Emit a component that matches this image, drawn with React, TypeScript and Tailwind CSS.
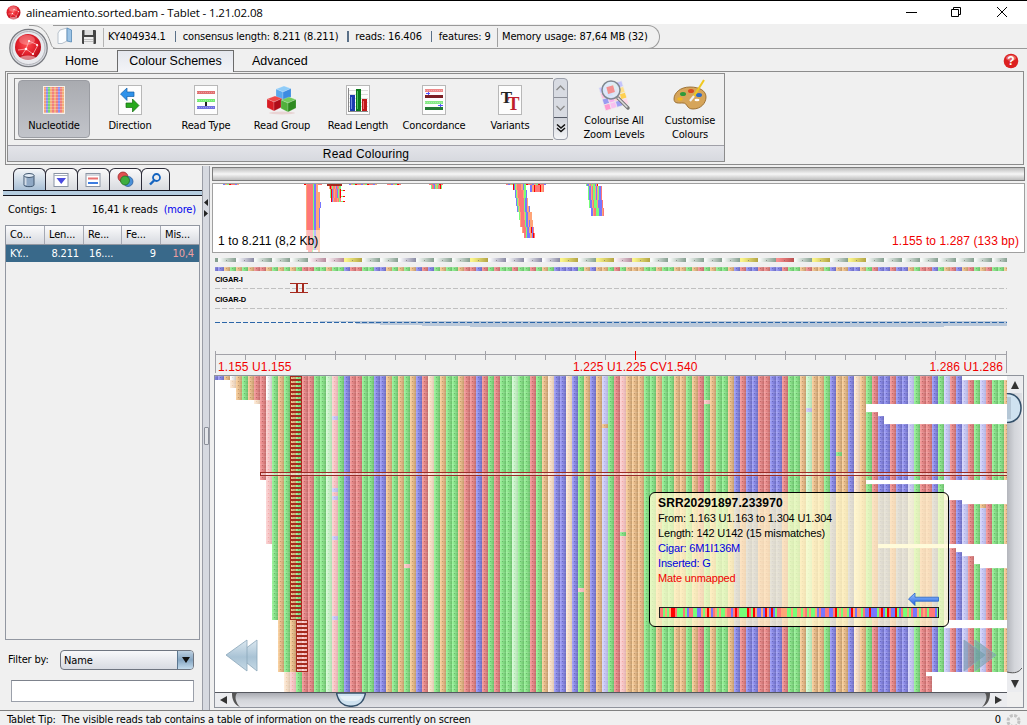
import React from "react";

const UI = "font-['DejaVu_Sans_Condensed','DejaVu_Sans',sans-serif] font-stretch-condensed tracking-[-0.16px]";
const ARIAL = "font-['Liberation_Sans',sans-serif]";

/* ---------- sequence data ---------- */

// G/B/R/O are matching bases, lower case letters are pale (mismatching) bases
const COLUMNS =
  "BBOnOGORRrGOGOGRRGGgrGBRRGGBBOGOGOBRoGOGGORRBRGRGGgGGRGOoBBoBGOBObGRrOOOGGOGGOOGORGOGGOBRBBRRBBRGGOgOOGBOOBoOGRBBRBBbGRRBGbRBbRGbRGGO";
const CONSENSUS_DIFFS: Record<number, string> = {
  3: "G", 9: "O", 19: "O", 20: "G", 36: "B", 50: "R", 56: "G", 59: "B", 65: "O",
  68: "G", 99: "R", 107: "B", 116: "O", 122: "O", 125: "O", 128: "O",
};
const CONSENSUS = COLUMNS.split("").map((c, i) => CONSENSUS_DIFFS[i] ?? c);
const PROTEIN = "gpgggrryggpgggyppppygyrygggggygRgygygggggggg";

const SHADES: Record<string, string[]> = {
  R: ["#f39c9c", "#ec9292", "#e48989", "#dc8181", "#d27878", "#c67070"],
  G: ["#9bf19b", "#92e992", "#8ae18a", "#81d881", "#78ce78", "#70c270"],
  B: ["#a0a0f4", "#9595ed", "#8b8be5", "#8181db", "#7979d0", "#7171c4"],
  O: ["#f7cf9e", "#efc594", "#e7bc8b", "#deb382", "#d4a979", "#c7a071"],
  r: ["#fbd2d2", "#f9cccc", "#f6c6c6", "#f1c0c0", "#ebbaba", "#e3b3b3"],
  g: ["#d6fad6", "#cff6cf", "#c9f2c9", "#c2ecc2", "#bbe6bb", "#b4deb4"],
  b: ["#d6d6fb", "#cfcff8", "#c9c9f4", "#c2c2ee", "#bcbce8", "#b5b5e0"],
  o: ["#fdebd8", "#fae5d0", "#f6dfc9", "#f0d9c2", "#ead2bb", "#e2cab3"],
  n: ["#ffffff", "#f8f8f8", "#efefef", "#e4e4e4", "#d8d8d8", "#cccccc"],
};
const DOTS: Record<string, string> = {
  R: "#b45f5f", G: "#5faf5f", B: "#6060b2", O: "#b58d62", r: "#ee9f9f", g: "#9fdd9f", b: "#a6a6e0", o: "#eac7a4", n: "#cccccc",
};

const ROWS = 79;
const firstColumn = (r: number) =>
  r < 1 ? 0 : r < 3 ? 3 : r < 6 ? 4 : r < 7 ? 7 : r < 26 ? 8 : r < 42 ? 9 : r < 61 ? 10 : r < 74 ? 11 : 12;
const RIGHT_EDGES: Record<number, number> = {
  0: 125, 7: 109, 8: 109, 9: 111, 10: 112, 11: 112, 26: 109, 27: 122, 28: 122, 29: 122, 30: 122, 31: 125,
  42: 111, 43: 124, 44: 125, 45: 127, 46: 127, 47: 128, 61: 122, 62: 122, 74: 119, 75: 120, 76: 120, 77: 120, 78: 120,
};
const SPOTS: Record<string, string> = {
  "20-10": "b", "20-28": "b", "20-30": "b", "20-40": "b", "20-60": "b", "65-12": "O", "82-6": "r", "99-8": "b",
  "104-19": "G", "68-39": "G", "32-47": "r", "61-53": "r", "128-32": "O",
};

function baseAt(k: number, r: number) {
  if (k < firstColumn(r) || k >= (RIGHT_EDGES[r] ?? 133)) return "";
  const spot = SPOTS[`${k}-${r}`];
  if (spot) return spot;
  if (k === 3 && r > 0) return "o";
  if (k === 7 && r === 6) return "o";
  if (k === 9 && r < 6) return "n";
  if (r >= 74 && k === 12) return "o";
  if (r >= 74 && k === 13) return "r";
  if (r >= 61 && r < 74 && (k === 14 || k === 15)) return "r";
  return COLUMNS[k];
}

function BasePatterns({ id, dx, h }: { id: string; dx: number; h: number }) {
  return (
    <defs>
      {Object.keys(SHADES).map((c) => (
        <pattern key={c} id={`${id}${c}`} x={dx} y={0} width={6} height={h} patternUnits="userSpaceOnUse">
          {SHADES[c].map((f, i) => (
            <rect key={i} x={i} y={0} width={1} height={h} fill={f} />
          ))}
          <rect x={0} y={0} width={6} height={1} fill="#fff" opacity={0.1} />
          <rect x={2} y={1} width={1} height={1} fill={DOTS[c]} opacity={0.75} />
        </pattern>
      ))}
    </defs>
  );
}

function ReadCanvas() {
  const runs: { k: number; from: number; to: number; c: string }[] = [];
  for (let k = 0; k < 133; k++) {
    let from = 0;
    for (let r = 1; r <= ROWS; r++) {
      const prev = baseAt(k, from);
      if (r === ROWS || baseAt(k, r) !== prev) {
        if (prev) runs.push({ k, from, to: r, c: prev });
        from = r;
      }
    }
  }
  return (
    <svg width={792} height={316} className="block shrink-0 bg-white" shapeRendering="crispEdges">
      <BasePatterns id="read" dx={3} h={4} />
      {runs.map((s, i) => (
        <rect key={i} x={6 * s.k - 3} y={4 * s.from} width={6} height={4 * (s.to - s.from)} fill={`url(#read${s.c})`} />
      ))}
      {Array.from({ length: 74 }, (_, r) => (
        <rect key={r} x={r < 61 ? 75.5 : 81.5} y={4 * r + 0.5} width={11} height={3} fill="none" stroke="#a52a1e" strokeWidth={1} />
      ))}
      <rect x={46} y={97} width={746} height={2} fill="#fff" opacity={0.45} />
      <rect x={45.5} y={96.5} width={760} height={3} fill="none" stroke="#9c2a24" strokeWidth={1} />
      <g shapeRendering="auto" stroke="#8ba7ba" strokeWidth={0.8}>
        <path d="M22 279 L42 264 V295Z" fill="url(#nav)" />
        <path d="M11 279 L32 264 V295Z" fill="url(#nav)" />
        <path d="M770 279 L749 264 V295Z" fill="#6f8fa8" fillOpacity={0.55} />
        <path d="M781 279 L760 264 V295Z" fill="#6f9fa8" fillOpacity={0.55} />
      </g>
      <defs>
        <linearGradient id="nav" x1="0" y1="0" x2="0" y2="1">
          <stop offset="0" stopColor="#dce8f0" />
          <stop offset=".55" stopColor="#a9c3d5" />
          <stop offset="1" stopColor="#c7dae6" />
        </linearGradient>
      </defs>
    </svg>
  );
}

/* ---------- overview ---------- */

function thin(x: number, w: number, y = 0) {
  const p = ["#ff7777", "#ff0000", "#77ff77", "#ffa577", "#7777ff", "#ff7777"];
  return Array.from({ length: Math.floor(w / 2) }, (_, i) => (
    <rect key={`${x}-${y}-${i}`} x={x + i * 2} y={y} width={2} height={1} fill={p[(i * 5 + x) % 6]} />
  ));
}
function stripes(x: number, y: number, h: number, colours: string) {
  const m: Record<string, string> = { r: "#ff7777", g: "#77ff77", b: "#7777ff", o: "#ffa577", X: "#ff0000", d: "#a52a1e" };
  return colours.split("").map((c, i) => <rect key={`${x}-${y}-${i}`} x={x + i} y={y} width={1} height={h} fill={m[c]} />);
}

function Overview() {
  return (
    <div className="relative mt-[2px] flex h-[70px] w-[813px] border border-[#a0a0a0] bg-white">
      <svg width={811} height={68} shapeRendering="crispEdges" className="absolute left-0 top-0">
        {thin(10, 16)}
        {thin(91, 18)}
        {stripes(93, 0, 52, "orrrrrrgbboo")}
        {stripes(93, 52, 14, "orrrrrrgbboob")}
        {stripes(95, 66, 2, "rrrrg")}
        {stripes(105, 8, 60, "oo")}
        {stripes(106, 24, 20, "b")}
        {stripes(107, 18, 6, "b")}
        <rect x={114} y={0} width={15} height={2} fill="#a52a1e" />
        {stripes(116, 2, 3, "oXrgrrobrrgg")}
        {stripes(117, 5, 9, "gXbrorrbgrX")}
        {stripes(118, 14, 4, "Xborrrorgr")}
        {thin(128, 4, 6)}
        {thin(128, 4, 12)}
        {thin(128, 4, 17)}
        {thin(136, 28)}
        {thin(174, 14)}
        {thin(216, 14)}
        {stripes(218, 1, 4, "grrbgogrrXg")}
        {thin(293, 40)}
        {stripes(300, 0, 6, "Xbgorrrroobgg")}
        {stripes(302, 6, 8, "bgorrrrroggb")}
        {stripes(303, 14, 8, "bgorrrrrgbbo")}
        {stripes(304, 22, 6, "bgorrrrgbboob")}
        {stripes(306, 28, 8, "gorrrogbboooo")}
        {stripes(307, 36, 7, "orrrrgbbobooo")}
        {stripes(309, 43, 6, "orrrgbbooXbr")}
        {stripes(311, 49, 5, "rrgbbboobXr")}
        {stripes(317, 1, 7, "bbooXrrrrrXoor")}
        {stripes(373, 0, 2, "gbborgoggboX")}
        {stripes(375, 2, 14, "gbborggobogbbr")}
        {stripes(376, 16, 8, "gbborgggobbbbr")}
        {stripes(378, 24, 8, "bborrgggbbbor")}
        <rect x={0} y={46} width={108} height={22} fill="#fff" opacity={0.5} />
      </svg>
      <div className={`${ARIAL} relative flex w-full items-end justify-between pb-[3px] pl-[5px] pr-[5px] text-[12px] leading-[15px] tracking-[0.1px] text-black`}>
        <span>1 to 8.211 (8,2 Kb)</span>
        <span className="text-[#f00000]">1.155 to 1.287 (133 bp)</span>
      </div>
    </div>
  );
}

function Tracks() {
  const pc: Record<string, [string, string]> = {
    g: ["#f7faf8", "#86a090"], p: ["#fbfbfd", "#8a8aa4"], r: ["#fbf3f6", "#b68a9c"], y: ["#fbf58a", "#b3a544"], R: ["#f88f8f", "#b95050"],
  };
  return (
    <svg width={813} height={122} className="block shrink-0" shapeRendering="crispEdges">
      <BasePatterns id="con" dx={6} h={4} />
      <defs>
        {Object.keys(pc).map((c) => (
          <linearGradient key={c} id={`aa${c}`}>
            <stop offset={0.1} stopColor={pc[c][0]} />
            <stop offset={1} stopColor={pc[c][1]} />
          </linearGradient>
        ))}
      </defs>
      <rect x={3} y={5} width={3} height={4} fill="#86a090" />
      {PROTEIN.split("").map((c, i) => (
        <g key={i}>
          <rect x={6 + i * 18} y={5} width={Math.min(18, 795 - 6 - i * 18)} height={4} fill={`url(#aa${c})`} />
          <rect x={14 + i * 18} y={7} width={1} height={1} fill="#666" opacity={0.6} />
        </g>
      ))}
      <g transform="translate(0 14)">
        {CONSENSUS.map((c, k) => (
          <rect key={k} x={k ? 6 * k : 3} y={0} width={k === 0 || k === 132 ? 3 : 6} height={4} fill={`url(#con${c})`} />
        ))}
      </g>
      <g className={ARIAL} fontSize={7.5} fontWeight={700} fill="#000" letterSpacing={-0.15}>
        <text x={3} y={29}>CIGAR-I</text>
        <text x={3} y={49}>CIGAR-D</text>
      </g>
      <g stroke="#c0c0c0" strokeDasharray="5 2">
        <path d="M3 35.5H795" />
        <path d="M3 55.5H795" />
      </g>
      <path d="M78 30.5H96M78 39.5H96" stroke="#a52a1e" />
      <path d="M85 30V40M91 30V40" stroke="#a52a1e" strokeWidth={2} />
      <path d="M108 68H795V73H732V74H258V73H210V72H168V71H144V69H108Z" fill="#b9c8da" />
      <path d="M3 69.5H795" stroke="#2c66a8" strokeDasharray="5 2" />
      <path d="M3 101.5H795" stroke="#a2a2a8" />
      {Array.from({ length: 26 }, (_, i) => i + 1).map((i) => {
        const major = i % 5 === 4;
        return <path key={i} d={`M${3.5 + i * 30} ${major ? 98 : 102}V107`} stroke={i === 14 ? "#f00000" : "#a2a2a8"} />;
      })}
      <path d="M3.5 98V120M794.5 98V120" stroke="#a2a2a8" />
    </svg>
  );
}

/* ---------- tooltip ---------- */

function ReadTooltip() {
  const seq = (COLUMNS.slice(8) + "GRBBOGRORGRRRBGO").toUpperCase().slice(0, 140).split("");
  [6, 7, 24, 38, 44, 47, 53, 56, 88, 96, 105, 111, 114, 118].forEach((p) => (seq[p] = "X"));
  const m: Record<string, string> = { R: "#ff7777", G: "#77ff77", B: "#7777ff", O: "#ffa577", X: "#ff0000" };
  return (
    <div className={`${ARIAL} absolute left-[434px] top-[116px] flex h-[135px] w-[300px] flex-col rounded-[6px] border border-black bg-[#fffacd]/75 pl-[8px] pt-[2px] text-[11px] leading-[15px] tracking-[-0.15px] text-black`}>
      <span className="text-[12px] font-bold leading-[16px] tracking-[0.15px]">SRR20291897.233970</span>
      <span>From: 1.163 U1.163 to 1.304 U1.304</span>
      <span>Length: 142 U142 (15 mismatches)</span>
      <span className="text-[#0000e0]">Cigar: 6M1I136M</span>
      <span className="text-[#0000e0]">Inserted: G</span>
      <span className="text-[#f00000]">Mate unmapped</span>
      <svg width={284} height={34} className="mt-[5px] block">
        <defs>
          <linearGradient id="arr" x1="0" y1="0" x2="0" y2="1">
            <stop offset="0" stopColor="#9cc4ff" />
            <stop offset="1" stopColor="#1f62e0" />
          </linearGradient>
        </defs>
        <path d="M250.500 8 L257 2 V6.2 H280.500 V10.2 H257 V14.5Z" fill="url(#arr)" stroke="#2663c8" strokeWidth={0.8} />
        <g shapeRendering="crispEdges">
          {seq.map((c, i) => (
            <rect key={i} x={1 + i * 2} y={17} width={2} height={10} fill={m[c]} />
          ))}
          <rect x={1.5} y={16.5} width={279} height={10} fill="none" stroke="#222" />
        </g>
      </svg>
    </div>
  );
}

/* ---------- ribbon ---------- */

function Page({ children }: { children: React.ReactNode }) {
  return (
    <svg width={24} height={30} viewBox="0 0 24 30" shapeRendering="crispEdges">
      <rect x={0.5} y={0.5} width={23} height={29} fill="#fdfdfd" stroke="#b8b8b8" />
      {children}
    </svg>
  );
}

const NucleotideIcon = () => (
  <svg width={24} height={30} shapeRendering="crispEdges">
    <rect x={1} y={1} width={22} height={28} fill="#f7eee6" />
    {["#f3a47a", "#8f8ff0", "#74d874", "#f3b07a", "#f08080", "#f3b07a", "#f08080", "#8f8ff0", "#f08080", "#f3b07a"].map((c, i) => (
      <rect key={i} x={2 + i * 2} y={2} width={2} height={26} fill={c} />
    ))}
    {Array.from({ length: 9 }, (_, i) => (
      <rect key={i} x={2} y={3 + i * 3} width={20} height={1} fill="#fff" opacity={0.25} />
    ))}
  </svg>
);
const DirectionIcon = () => (
  <Page>
    <g shapeRendering="auto" strokeWidth={0.7}>
      <path d="M2.5 9 L9 3V7H16V11.5H9V15.5Z" fill="#2f92ea" stroke="#1560a8" />
      <path d="M21 20.5 L14.500 14V18H8V22.500H14.500V27Z" fill="#27a81c" stroke="#146b0e" />
    </g>
  </Page>
);
const Strand = ({ y, c }: { y: number; c: string }) => (
  <>
    <rect x={3} y={y} width={18} height={3} fill={c} />
    <path d={`M3 ${y + 1.5}H21`} stroke="#fff" strokeOpacity={0.3} strokeDasharray="1 1" />
  </>
);
const ReadTypeIcon = () => (
  <Page>
    <Strand y={6} c="#e07070" />
    <Strand y={14} c="#72ea72" />
    <Strand y={21} c="#7070e0" />
    <path d="M12 17V21" stroke="#222" strokeWidth={2} />
  </Page>
);
const Cube = ({ x, y, a, b, c }: { x: number; y: number; a: string; b: string; c: string }) => (
  <g transform={`translate(${x} ${y})`} strokeWidth={0.3} stroke="#fff" strokeOpacity={0.6}>
    <path d="M0 3L8 0L15 2.500L7 6Z" fill={a} />
    <path d="M0 3L7 6V15L0 11.500Z" fill={b} />
    <path d="M7 6L15 2.500V11L7 15Z" fill={c} />
  </g>
);
const ReadGroupIcon = () => (
  <svg width={30} height={30}>
    <Cube x={9} y={1} a="#8fccf8" b="#5aa9ee" c="#3c8be0" />
    <Cube x={0} y={11} a="#f04a4a" b="#d81c24" c="#b00c18" />
    <Cube x={14} y={12} a="#72cc5c" b="#52b03c" c="#2f8a20" />
    <ellipse cx={15} cy={28} rx={13} ry={1.5} fill="#c66" opacity={0.2} />
  </svg>
);
const ReadLengthIcon = () => (
  <Page>
    <path d="M2 5.500H22M2 9.500H22M2 13.500H22M2 17.500H22M2 21.500H22" stroke="#ddd" />
    <path d="M2.500 3V26.500H22" fill="none" stroke="#888" />
    {[["4", "10", "16", "#1c3cb0", "#6f8fe8"], ["10", "4", "22", "#0c7a1c", "#50c860"], ["16", "14", "12", "#c01818", "#f07070"]].map((b) => (
      <g key={b[0]}>
        <rect x={+b[0]} y={+b[1]} width={5} height={+b[2]} fill={b[3]} />
        <rect x={+b[0] + 1} y={+b[1] + 2} width={1} height={+b[2] - 4} fill={b[4]} />
      </g>
    ))}
  </Page>
);
const ConcordanceIcon = () => (
  <Page>
    <Strand y={4} c="#e88" />
    <rect x={3} y={10} width={18} height={3} fill="#7c1f24" />
    <Strand y={16} c="#86ea86" />
    <rect x={3} y={22} width={18} height={3} fill="#237a34" />
    <path d="M4 8.500H8M6.500 7V10M16 20.500H21M18.500 19V22" stroke="#55f" />
  </Page>
);
const VariantsIcon = () => (
  <Page>
    <g className="font-['Liberation_Serif',serif]" fontWeight={700} textAnchor="middle" letterSpacing={0}>
      <text x={8.5} y={18} fontSize={17} fill="#222">T</text>
      <text x={15.5} y={25} fontSize={18} fill="#c01f2c">T</text>
    </g>
  </Page>
);
const ColouriseIcon = () => (
  <svg width={34} height={32}>
    <g transform="rotate(-17 16 18)" stroke="#eee" strokeWidth={0.6}>
      {Array.from({ length: 16 }, (_, i) => (
        <rect key={i} x={5 + (i % 4) * 6} y={5 + Math.floor(i / 4) * 6} width={6} height={6}
          fill={["#c8c8ff", "#ffd0e0", "#fff2b0", "#c4c4fc", "#ffc0e0", "#b8b8f8", "#ffc8d0", "#ffe08a", "#9c9cf0", "#f8b0f0", "#ffc8c8", "#ffd050", "#ff9ad0", "#f8c0f0", "#a0a0f4", "#ffd8e8"][i]} />
      ))}
    </g>
    <path d="M21 19L31 29" stroke="#777" strokeWidth={3.400} strokeLinecap="round" />
    <path d="M21 19L30 28" stroke="#ddd" strokeWidth={1.5} strokeLinecap="round" />
    <circle cx={14} cy={11} r={9} fill="#d8ebfb" fillOpacity={0.8} stroke="#808890" strokeWidth={1.5} />
    <rect x={10} y={7} width={7} height={7} fill="#f49090" transform="rotate(-15 14 10)" />
  </svg>
);
const PaletteIcon = () => (
  <svg width={34} height={32}>
    <path d="M17 8C7 8 1 14 1 20C1 25 6 24 10 24C15 24 13 30 20 30C28 30 33 24 33 18C33 12 27 8 17 8Z" fill="#d6a55a" stroke="#966a2c" strokeWidth={0.9} />
    <ellipse cx={10} cy={15} rx={3} ry={2} fill="#2d9a3a" />
    <ellipse cx={18} cy={12} rx={3} ry={2} fill="#d84a20" />
    <ellipse cx={26} cy={16} rx={3} ry={2} fill="#2f6ac8" />
    <ellipse cx={7} cy={20} rx={2.800} ry={1.800} fill="#f0b820" />
    <ellipse cx={24} cy={21} rx={2.500} ry={1.300} fill="#fff" />
    <path d="M31 1L21 17" stroke="#f0c820" strokeWidth={2} />
    <path d="M21 17L17 22" stroke="#eee" strokeWidth={2.200} />
  </svg>
);

const SCHEMES: { label: string; icon: React.ReactNode; active?: boolean }[] = [
  { label: "Nucleotide", icon: <NucleotideIcon />, active: true },
  { label: "Direction", icon: <DirectionIcon /> },
  { label: "Read Type", icon: <ReadTypeIcon /> },
  { label: "Read Group", icon: <ReadGroupIcon /> },
  { label: "Read Length", icon: <ReadLengthIcon /> },
  { label: "Concordance", icon: <ConcordanceIcon /> },
  { label: "Variants", icon: <VariantsIcon /> },
];

function Orb({ size }: { size: number }) {
  return (
    <svg width={size} height={size} viewBox="0 0 28 28" className="shrink-0">
      <defs>
        <radialGradient id="orb" cx=".45" cy=".4" r=".6">
          <stop offset="0" stopColor="#ff5050" />
          <stop offset=".6" stopColor="#e2202c" />
          <stop offset="1" stopColor="#b50d18" />
        </radialGradient>
      </defs>
      <circle cx={14} cy={14} r={13} fill="url(#orb)" />
      <ellipse cx={13} cy={7} rx={8} ry={5} fill="#fff" opacity={0.25} />
      <path d="M4 17L12 16L15 8L24 12M12 16L19 21L24 12M12 16L8 22" stroke="#ffb5b5" strokeWidth={0.8} fill="none" />
      <g fill="#fff">
        <circle cx={12} cy={16} r={1.300} />
        <circle cx={15} cy={8} r={1.100} />
        <circle cx={19} cy={21} r={1.100} />
        <circle cx={23} cy={12} r={1} />
      </g>
      <ellipse cx={14} cy={25} rx={8} ry={2.500} fill="#fff" opacity={0.45} />
    </svg>
  );
}

function Ribbon() {
  return (
    <div className="mb-px ml-[5px] mr-[3px] flex h-[94px] shrink-0 flex-col border border-[#8c8c8c] pl-px pt-px">
      <div className="flex h-[89px] w-[718px] flex-col border border-[#8c8c8c] bg-[#f0f0f0]">
        <div className="flex h-[71px] shrink-0 pl-[6px] pt-[4px]">
          <div className="flex h-[62px] w-[539px] shrink-0 border border-r-0 border-[#8c8c8c] pl-[3px] pt-px">
            {SCHEMES.map((s) => (
              <div key={s.label} className="flex w-[76px] shrink-0">
                <div className={`flex h-[58px] w-[72px] flex-col items-center rounded-[4px] pt-[4px] ${s.active ? "border border-[#9a9ca2] bg-linear-to-b from-[#a9abb0] to-[#c2c4ca]" : "border border-transparent"}`}>
                  <div className="flex h-[32px] shrink-0 items-start">{s.icon}</div>
                  <span className={`${UI} whitespace-nowrap pt-[2px] text-[11px] leading-[14px] text-black`}>{s.label}</span>
                </div>
              </div>
            ))}
          </div>
          <div className="flex h-[62px] w-[15px] shrink-0 flex-col overflow-hidden rounded-[4px] border border-[#9a9ea8] bg-[#d8dbe2]">
            <div className="flex h-[19px] items-center justify-center border-b border-[#8c8f98]">
              <svg width={9} height={6}><path d="M.5 5L4.500 1L8.500 5" fill="none" stroke="#8a8a8a" strokeWidth={1.300} /></svg>
            </div>
            <div className="flex h-[20px] items-center justify-center">
              <svg width={9} height={6}><path d="M.5 1L4.500 5L8.500 1" fill="none" stroke="#8a8a8a" strokeWidth={1.300} /></svg>
            </div>
            <div className="flex h-[22px] items-center justify-center rounded-b-[4px] border-t border-[#555a66] bg-linear-to-b from-[#d0d3da] to-[#f4f5f7]">
              <svg width={10} height={9}><path d="M1 .5L5 4L9 .5M1 4L5 7.500L9 4" fill="none" stroke="#111" strokeWidth={1.500} /></svg>
            </div>
          </div>
          <div className={`${UI} flex text-center text-[11px] leading-[14px] text-black`}>
            <div className="ml-[8px] flex w-[76px] shrink-0 flex-col items-center gap-[3px] pt-px">
              <ColouriseIcon />
              <span className="whitespace-nowrap">Colourise All<br />Zoom Levels</span>
            </div>
            <div className="flex w-[76px] shrink-0 flex-col items-center gap-[3px] pt-px">
              <PaletteIcon />
              <span className="whitespace-nowrap">Customise<br />Colours</span>
            </div>
          </div>
        </div>
        <div className={`${ARIAL} flex flex-1 items-center justify-center border-t border-[#a0a0a8] bg-linear-to-b from-[#e3e4e9] to-[#d7d9df] pt-px text-[12px] leading-[14px] tracking-[0.22px] text-black`}>
          Read Colouring
        </div>
      </div>
    </div>
  );
}

/* ---------- header ---------- */

function Header() {
  const bar = <span className="ml-[9px] mr-[6.500px] inline-block h-[11px] w-[1.500px] bg-[#5a7088] align-[-2px]" />;
  return (
    <>
      <div className="flex h-[24px] shrink-0 items-center border-t border-black bg-white pl-[6px]">
        <Orb size={15} />
        <span className="ml-[5px] flex-1 whitespace-nowrap font-['Open_Sans','Noto_Sans',sans-serif] text-[11.500px] tracking-[-0.13px] text-black">
          alineamiento.sorted.bam - Tablet - 1.21.02.08
        </span>
        <svg width={122} height={22} fill="none" stroke="#000">
          <path d="M0 10.500H11" transform="translate(1 0)" />
          <path d="M46.500 7.500H53.500V14.500H46.500ZM48.500 7V5.500H55.500V12.500H54" />
          <path d="M92 5L102 15M102 5L92 15" />
        </svg>
      </div>
      <div className="relative flex h-[25px] shrink-0 pl-[53px] pt-px">
        <div className={`${UI} flex h-[24px] w-[607px] shrink-0 items-center rounded-r-[12px] border border-l-0 border-[#9a9a9a] text-[11px] text-black`}>
          <svg width={50} height={20} className="shrink-0">
            <path d="M7 3L14 1V14L9 16.500H5V6Z" fill="#fbfdff" stroke="#a8b4c0" strokeWidth={0.800} />
            <path d="M14 1L18.500 3V15L14 14Z" fill="#9cc4e6" stroke="#5588b4" strokeWidth={0.800} />
            <rect x={29} y={3} width={14} height={14} rx={1} fill="#444" />
            <rect x={31.500} y={3} width={8.500} height={5} fill="#ddd" />
            <rect x={31} y={10} width={9.500} height={7} fill="#eee" />
            <path d="M31 12.500H40M31 14.500H40" stroke="#aaa" strokeWidth={0.700} />
          </svg>
          <div className="mr-[4px] h-[19px] w-px shrink-0 bg-[#b4b4b4]" />
          <span className="w-[389px] shrink-0 whitespace-nowrap">
            KY404934.1{bar}consensus length: 8.211 (8.211){bar}reads: 16.406{bar}features: 9
          </span>
          <div className="mr-[4px] h-[19px] w-px shrink-0 bg-[#a0a0a0]" />
          <span className="whitespace-nowrap">Memory usage: 87,64 MB (32)</span>
        </div>
        <div className="-ml-[12px] flex-1 border-b border-[#9a9a9a]" />
        <svg width={58} height={48} className="absolute left-[4px] top-0 z-10">
          <path d="M25 1.500H29C41 1.500 45 14 47 20C48 24 51 24.500 53 24.500" fill="none" stroke="#9a9a9a" />
          <circle cx={24.500} cy={24} r={18.700} fill="#d9dbe0" stroke="#77797f" strokeWidth={1.200} />
          <circle cx={24.500} cy={24} r={16.500} fill="#e9eaee" stroke="#a4a6ac" strokeWidth={0.800} />
        </svg>
        <div className="absolute left-[14px] top-[9px] z-10">
          <Orb size={28} />
        </div>
      </div>
      <div className={`${ARIAL} flex h-[22px] shrink-0 items-end text-[12.500px] text-black`}>
        <span className="flex h-[21px] w-[117px] items-center pl-[65px] pt-[2px]">Home</span>
        <span className="relative top-[1px] z-10 flex h-[22px] w-[117px] items-center justify-center border border-b-0 border-[#6b6b6b] bg-linear-to-b from-[#e4e7ee] to-[#f3f4f7]">
          Colour Schemes
        </span>
        <span className="flex h-[21px] flex-1 items-center pl-[18px] pt-[2px]">Advanced</span>
        <svg width={16} height={16} className="mb-[2px] mr-[8px]">
          <circle cx={8} cy={8} r={7.300} fill="#dc2020" />
          <ellipse cx={8} cy={5} rx={5} ry={3} fill="#fff" opacity={0.3} />
          <text x={8} y={12.200} fontSize={12} fontWeight={700} fill="#fff" textAnchor="middle">?</text>
        </svg>
      </div>
    </>
  );
}

/* ---------- left panel ---------- */

const SIDE_ICONS = [
  <svg key="db" width={16} height={16}>
    <path d="M3 3.500V13C3 15.200 13 15.200 13 13V3.500" fill="#8fa8c4" stroke="#40566e" />
    <path d="M4.500 5V13" stroke="#fff" strokeWidth={2} opacity={0.6} />
    <ellipse cx={8} cy={3.500} rx={5} ry={2} fill="#e4eef8" stroke="#40566e" />
  </svg>,
  <svg key="flt" width={16} height={16}>
    <rect x={1} y={1.500} width={14} height={13} fill="#fff" stroke="#8a94a4" />
    <path d="M1 3.500H15" stroke="#a8b0bc" />
    <path d="M3.500 6H13L8.250 12Z" fill="#4a4ae0" />
  </svg>,
  <svg key="rows" width={16} height={16}>
    <rect x={1} y={1.500} width={14} height={13} fill="#fff" stroke="#8a94a4" />
    <path d="M1 3H15" stroke="#a8b0bc" />
    <path d="M3 6.500H13" stroke="#e87070" strokeWidth={2} />
    <path d="M3 11H13" stroke="#3c7ce0" strokeWidth={2} />
  </svg>,
  <svg key="venn" width={17} height={17}>
    <circle cx={6} cy={6} r={5} fill="#e05050" stroke="#902020" strokeWidth={0.700} />
    <circle cx={11} cy={10.500} r={5} fill="#4a90d8" stroke="#205090" strokeWidth={0.700} />
    <circle cx={8} cy={9.500} r={4.500} fill="#3fae3f" stroke="#206820" strokeWidth={0.700} />
  </svg>,
  <svg key="find" width={16} height={16} fill="none" stroke="#1464c0">
    <circle cx={9.500} cy={5.500} r={3.500} strokeWidth={1.800} />
    <path d="M7 8.500L3 12.500" strokeWidth={2.400} />
  </svg>,
];

function SidePanel() {
  const head = ["Co...", "Len...", "Re...", "Fe...", "Mis..."];
  const grid = "grid grid-cols-[39px_39px_38px_39px_38px]";
  return (
    <div className={`${UI} flex w-[199px] shrink-0 flex-col text-[11px] text-black`}>
      <div className="flex h-[25px] items-end border-b border-[#14141e] pl-[10px]">
        {SIDE_ICONS.map((icon, i) => (
          <div key={i} className={`-mr-px flex h-[22px] items-center justify-center rounded-t-[6px] border border-b-0 border-[#2c2c38] pr-px ${i === 4 ? "w-[29px]" : "w-[33px]"} ${i === 0 ? "bg-linear-to-b from-[#f4f6f8] to-[#a9c0d6]" : "bg-linear-to-b from-[#fafafa] to-[#d8dadf]"}`}>
            {icon}
          </div>
        ))}
      </div>
      <div className="h-[5px] border-b border-[#14141e] bg-[#b5cde0]" />
      <div className="flex h-[29px] items-center justify-between pl-[5px] pr-[6px]">
        <span>Contigs: 1</span>
        <span>16,41 k reads <span className="ml-[3px] text-[#0000ee]">(more)</span></span>
      </div>
      <div className="ml-[2px] flex h-[415px] w-[195px] flex-col border border-[#9297a1] bg-[#f0f0f0]">
        <div className={`${grid} h-[19px] border-b border-[#9297a1] bg-linear-to-b from-[#fbfbfc] to-[#d7dae0]`}>
          {head.map((h) => (
            <span key={h} className="flex items-center border-r border-[#a5a9b3] pl-[4px] last:border-r-0">{h}</span>
          ))}
        </div>
        <div className={`${grid} h-[17px] items-center bg-[#39698a] pt-px text-white`}>
          <span className="pl-[4px]">KY...</span>
          <span className="pr-[5px] text-right">8.211</span>
          <span className="pl-[5px]">16....</span>
          <span className="pr-[5px] text-right">9</span>
          <span className="pr-[5px] text-right text-[#f0a0a0]">10,4</span>
        </div>
      </div>
      <div className="mt-[9px] flex h-[22px] items-center pl-[5px]">
        <span className="w-[52px] whitespace-nowrap">Filter by:</span>
        <div className="flex h-[20px] w-[134px] overflow-hidden rounded-[4px] border border-[#6f7580] bg-linear-to-b from-[#f8f8fa] to-[#d8dbe2]">
          <span className="flex-1 pl-[3px] leading-[19px]">Name</span>
          <span className="flex w-[16px] items-center justify-center border-l border-[#5b7690] bg-linear-to-b from-[#bccfe0] via-[#86a6c2] to-[#c4dcee]">
            <svg width={8} height={6}><path d="M0 0H8L4 6Z" fill="#111" /></svg>
          </span>
        </div>
      </div>
      <div className="ml-[8px] mt-[9px] h-[22px] w-[183px] border border-[#9ba0aa] border-t-[#7d828c] bg-white" />
    </div>
  );
}

function Splitter() {
  return (
    <div className="flex w-[8px] shrink-0 flex-col items-center border-x border-[#9a9da6] bg-[#d6d9e0]">
      <svg width={6} height={22} className="mt-[32px]">
        <path d="M5 1V8L1 4.500ZM1 12V19L5 15.500Z" fill="#222" />
      </svg>
      <div className="mt-[207px] h-[18px] w-[5px] rounded-[1px] border border-[#8c909a] bg-[#e4e6ea]" />
    </div>
  );
}

/* ---------- right panel ---------- */

function VerticalScroll() {
  return (
    <div className="relative flex w-[15px] shrink-0 flex-col bg-linear-to-r from-[#b4b6bc] via-[#d3d5da] to-[#dfe0e5]">
      <div className="flex h-[17px] items-center justify-center bg-[#ebecef]">
        <svg width={8} height={8}><path d="M0 8H8L4 0Z" fill="#333" /></svg>
      </div>
      <svg width={15} height={30} className="block">
        <path d="M0 0.500C8 .5 14 6 14 15S8 29.500 0 29.500" fill="#cfe2f0" stroke="#34506a" strokeWidth={1.500} />
        <path d="M0 4H4V26H0Z" fill="#a3b6c4" opacity={0.6} />
      </svg>
      <div className="flex-1" />
      <svg width={15} height={8} className="block"><path d="M0 4C8 6 12 4 15 0V8H0Z" fill="#ebecef" /><path d="M0 4C8 6 12 4 15 0" fill="none" stroke="#555" /></svg>
      <div className="flex h-[16px] items-center justify-center bg-[#ebecef]">
        <svg width={8} height={8}><path d="M0 0H8L4 8Z" fill="#333" /></svg>
      </div>
    </div>
  );
}

function HorizontalScroll() {
  return (
    <div className="flex h-[14px] w-[792px] bg-linear-to-b from-[#a9abb2] via-[#d3d5da] to-[#e0e1e6]">
      <div className="flex w-[17px] items-center justify-center bg-[#ebecef]">
        <svg width={7} height={8}><path d="M7 0V8L0 4Z" fill="#333" /></svg>
      </div>
      <svg width={8} height={14} className="block"><path d="M0 0C0 8 3 12 8 14H0Z" fill="#ebecef" /><path d="M0 0H5C2 4 4 10 8 14C2 12 0 6 0 0Z" fill="#555" /></svg>
      <svg width={30} height={14} className="ml-[96px] block">
        <path d="M.5 0C2 8 7 13.300 15 13.300S28 8 29.500 0Z" fill="#cfe2f0" stroke="#34506a" strokeWidth={1.500} />
        <path d="M4 3H26C24 8 20 8 15 8S6 8 4 3Z" fill="#fff" opacity={0.5} />
      </svg>
      <div className="flex-1" />
      <svg width={8} height={14} className="block"><path d="M8 0C8 8 5 12 0 14H8Z" fill="#ebecef" /><path d="M8 0H3C6 4 4 10 0 14C6 12 8 6 8 0Z" fill="#555" /></svg>
      <div className="flex w-[17px] items-center justify-center bg-[#ebecef]">
        <svg width={7} height={8}><path d="M0 0V8L7 4Z" fill="#333" /></svg>
      </div>
    </div>
  );
}

function ViewPanel() {
  return (
    <div className="ml-[2px] flex flex-1 flex-col">
      <div className="mt-px h-[14px] w-[813px] border border-[#7c7c7c] bg-linear-to-b from-[#bdbdbd] via-[#f6f6f6] to-[#bdbdbd]" />
      <Overview />
      <div className="relative flex h-[122px] flex-col">
        <Tracks />
        <div className={`${ARIAL} absolute left-[6px] top-[106px] flex w-[785px] text-[12px] leading-[16px] tracking-[0.12px] text-[#f00000]`}>
          <span className="w-[355px]">1.155 U1.155</span>
          <span className="flex-1">1.225 U1.225 CV1.540</span>
          <span>1.286 U1.286</span>
        </div>
      </div>
      <div className="relative ml-[2px] flex h-[333px] w-[810px] flex-col border border-[#8f939c]">
        <div className="flex h-[316px] shrink-0">
          <ReadCanvas />
          <VerticalScroll />
        </div>
        <div className="w-[792px] border-t border-[#55585f]" />
        <HorizontalScroll />
        <ReadTooltip />
      </div>
    </div>
  );
}

export default function App() {
  return (
    <div className="flex h-[725px] w-[1027px] flex-col overflow-hidden bg-[#f0f0f0]">
      <Header />
      <Ribbon />
      <div className="flex h-[544px] shrink-0 pl-[3px]">
        <SidePanel />
        <Splitter />
        <ViewPanel />
      </div>
      <div className={`${UI} flex h-[16px] shrink-0 items-center justify-between border-t border-[#808080] pl-[7px] pr-[6px] text-[11px] text-black`}>
        <span className="pt-[4px]">Tablet Tip:&nbsp; The visible reads tab contains a table of information on the reads currently on screen</span>
        <span className="flex items-center gap-[5px] pt-[4px]">
          0
          <svg width={15} height={14} className="-translate-y-[1px]">
            <circle cx={7.500} cy={8} r={5.500} fill="none" stroke="#c2c2c2" strokeWidth={3} strokeDasharray="2.900 1.420" />
          </svg>
        </span>
      </div>
    </div>
  );
}
